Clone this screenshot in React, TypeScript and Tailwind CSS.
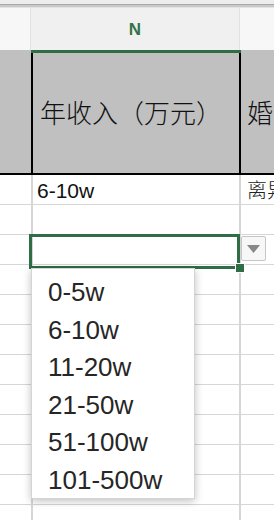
import { ReactNode } from 'react';

const cjk = '"Noto Sans CJK SC", "Noto Sans", sans-serif';
const latin = '"Liberation Sans", Arial, sans-serif';

const options = ['0-5w', '6-10w', '11-20w', '21-50w', '51-100w', '101-500w'];

function GridRow({ children, right }: { children?: ReactNode; right?: ReactNode }) {
  return (
    <div className="flex h-[30px] border-b border-[#d6d6d6] bg-white">
      <div className="w-[33px] shrink-0 border-r-2 border-[#d6d6d6]" />
      <div className="w-[208px] shrink-0 border-r-2 border-[#d6d6d6] flex items-center pl-[4px] pt-[2px] overflow-hidden">
        {children}
      </div>
      <div className="flex-1 min-w-0 flex items-center pl-[6px] overflow-hidden whitespace-nowrap">{right}</div>
    </div>
  );
}

export default function App() {
  return (
    <div className="relative w-[274px] h-[520px] overflow-hidden bg-white" style={{ fontFamily: latin }}>
      {/* toolbar edge */}
      <div className="h-[4px] bg-[#ededed]" />
      <div className="h-px bg-[#a9a9a9]" />
      <div className="h-[2px] bg-[#c9c9c9]" />
      <div className="h-px bg-[#e3e3e3]" />

      {/* column letters */}
      <div className="flex h-[42px]">
        <div className="w-[31px] shrink-0 bg-[#f7f7f7] border-r border-[#e2e2e2]" />
        <div className="w-[209px] shrink-0 bg-[#f0f0f0] border-r border-[#e2e2e2] flex items-center justify-center">
          <span className="text-[17px] font-bold text-[#33734a] mt-[2px]">N</span>
        </div>
        <div className="flex-1 bg-[#f7f7f7]" />
      </div>

      {/* header row */}
      <div className="flex h-[125px] bg-[#c0c0c0] border-b-2 border-black">
        <div className="w-[31px] shrink-0" />
        <div className="w-[210px] shrink-0 border-x-2 border-black relative flex items-center pl-[7px]">
          <div className="absolute -left-[2px] -right-[2px] top-0 h-[3px] bg-[#2f6d46]" />
          <span className="text-[26px] font-light text-[#111] whitespace-nowrap" style={{ fontFamily: cjk }}>
            年收入（万元）
          </span>
        </div>
        <div className="flex-1 min-w-0 flex items-center pl-[6px] overflow-hidden whitespace-nowrap">
          <span className="text-[26px] font-light text-[#111]" style={{ fontFamily: cjk }}>
            婚姻
          </span>
        </div>
      </div>

      {/* data rows */}
      <GridRow
        right={
          <span className="text-[20px] font-light text-[#222]" style={{ fontFamily: cjk }}>
            离异
          </span>
        }
      >
        <span className="text-[21px] text-[#111]">6-10w</span>
      </GridRow>
      {Array.from({ length: 11 }).map((_, i) => (
        <GridRow key={i} />
      ))}

      {/* selected cell */}
      <div className="absolute left-[29px] top-[234px] w-[211px] h-[35px] border-[3px] border-[#2f6d46]" />
      <div className="absolute left-[235px] top-[263px] w-[10px] h-[10px] bg-[#2f6d46] border border-white" />

      {/* dropdown button */}
      <div className="absolute left-[241px] top-[236px] w-[25px] h-[25px] bg-[#f7f7f7] border border-[#c6c6c6] rounded-[2px] flex items-center justify-center">
        <svg width="13" height="8" viewBox="0 0 13 8">
          <path d="M0 0 L13 0 L6.5 8 Z" fill="#888888" />
        </svg>
      </div>

      {/* dropdown list */}
      <div className="absolute left-[31px] top-[268px] w-[164px] h-[231px] bg-white border border-[#d4d4d4] shadow-[0_2px_8px_rgba(0,0,0,0.25)] pt-[5px] pl-[16px]">
        {options.map((o) => (
          <div key={o} className="text-[26px] leading-[37.6px] text-[#262626] whitespace-nowrap">
            {o}
          </div>
        ))}
      </div>
    </div>
  );
}
